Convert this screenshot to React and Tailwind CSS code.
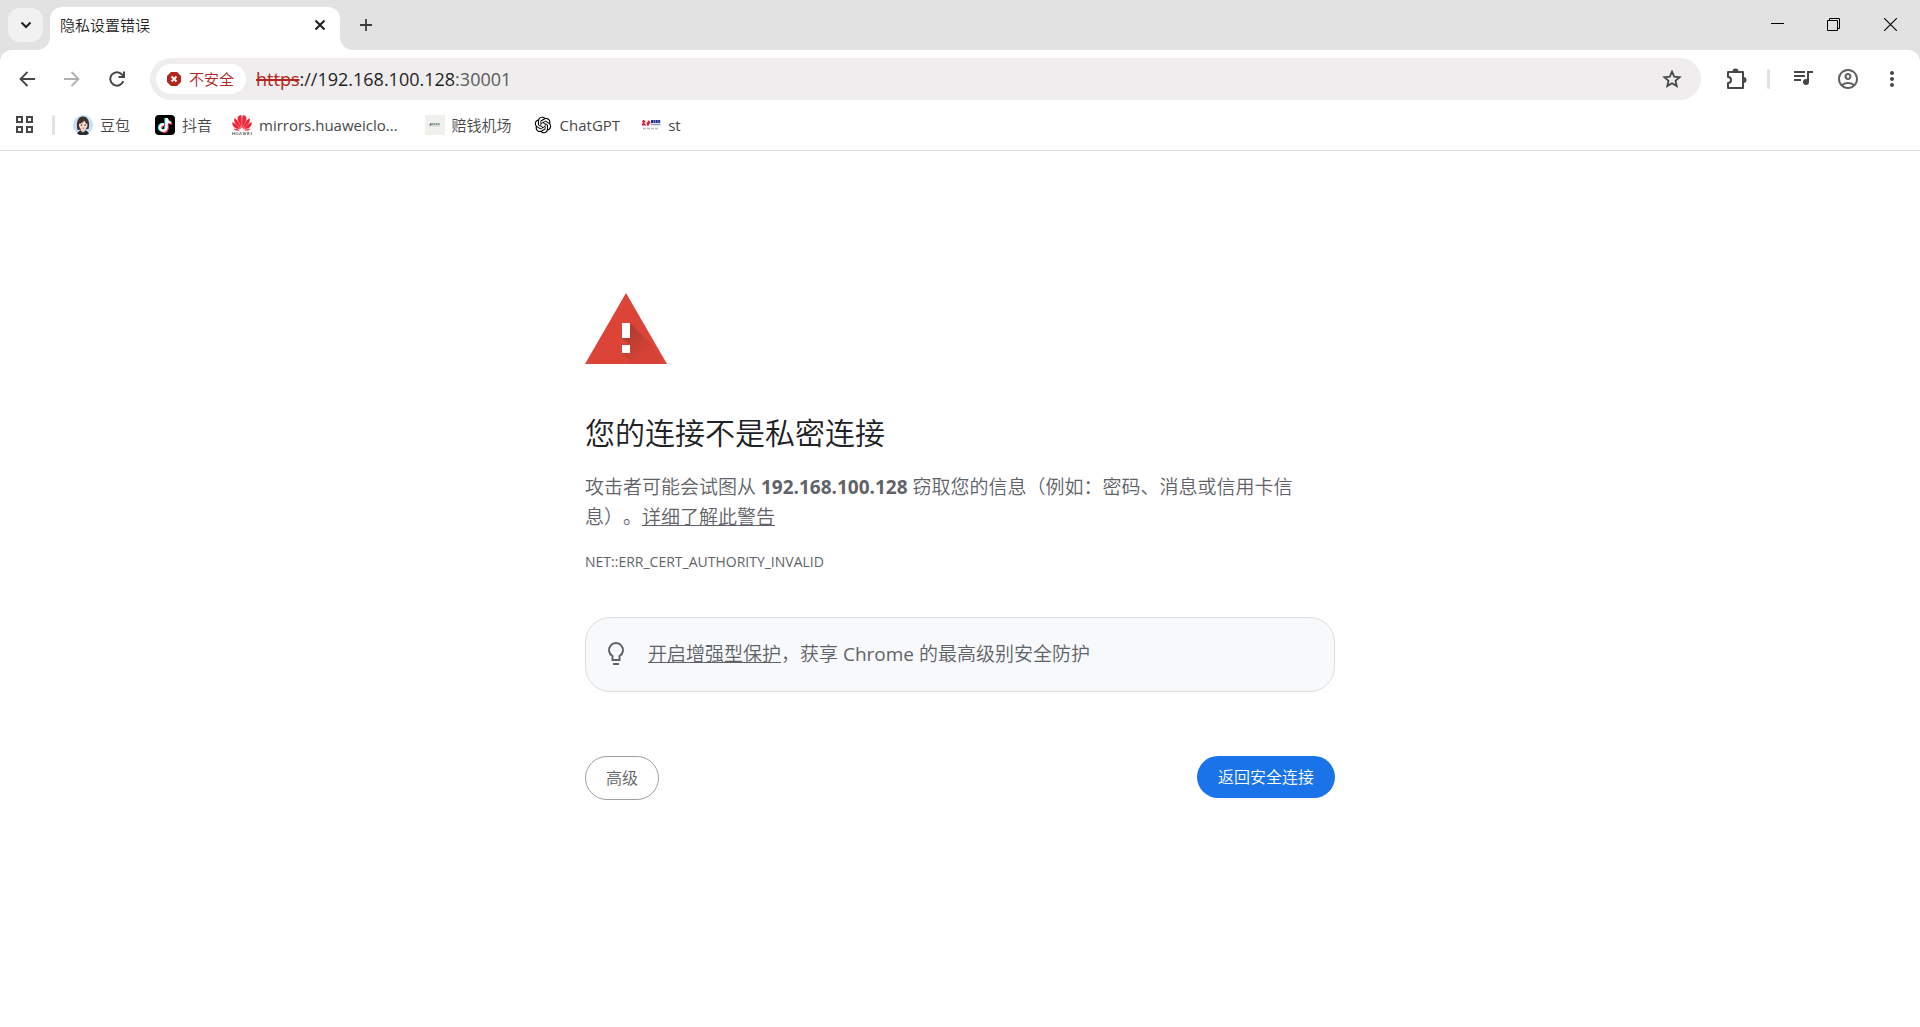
import React from "react";
import { MdOutlineAccountCircle, MdMoreVert } from "react-icons/md";
import { FaTiktok } from "react-icons/fa6";
import { RiOpenaiFill } from "react-icons/ri";

function TabCorner({ flip }) {
  return (
    <svg
      viewBox="0 0 13 13"
      aria-hidden="true"
      className={
        flip
          ? "absolute bottom-0 left-full size-[13px] -scale-x-100"
          : "absolute right-full bottom-0 size-[13px]"
      }
    >
      <path d="M13 0v13H0C7.200 13 13 7.200 13 0z" fill="#fff" />
    </svg>
  );
}

function TitleBar() {
  return (
    <header className="flex h-[50px] items-start pl-2">
      <button
        aria-label="搜索标签页"
        className="mt-2 flex h-[34px] w-[35px] items-center justify-center rounded-xl bg-[#f1f1f1]"
      >
        <svg viewBox="0 0 12 8" className="h-2 w-3" fill="none" stroke="#1f1f1f" strokeWidth="2">
          <path d="M1.500 1.500L6 6l4.500-4.500" />
        </svg>
      </button>
      <div className="relative mt-[7px] ml-[7px] h-[43px] w-[290px] rounded-t-xl bg-white">
        <TabCorner />
        <TabCorner flip />
        <div className="flex h-9 items-center justify-between pr-3 pl-[10px]">
          <span className="text-[15px] leading-5 text-[#1f1f1f]">隐私设置错误</span>
          <button aria-label="关闭标签页" className="flex size-4 items-center justify-center">
            <svg viewBox="0 0 12 12" className="size-3" stroke="#1f1f1f" strokeWidth="2">
              <path d="M1.500 1.500l9 9M10.500 1.500l-9 9" />
            </svg>
          </button>
        </div>
      </div>
      <button aria-label="新标签页" className="mt-[15px] ml-4 flex size-5 items-center justify-center">
        <svg viewBox="0 0 12 12" className="size-3" stroke="#3c3c3c" strokeWidth="1.800">
          <path d="M6 0v12M0 6h12" />
        </svg>
      </button>
      <div className="ml-auto flex h-12 items-center">
        <button aria-label="最小化" className="flex h-full w-14 items-center justify-center">
          <svg viewBox="0 0 13 13" className="size-[13px]" stroke="#000">
            <path d="M0 5.500h13" />
          </svg>
        </button>
        <button aria-label="还原" className="flex h-full w-14 items-center justify-center">
          <svg viewBox="0 0 13 13" className="size-[13px]" stroke="#000" fill="none">
            <path d="M.5 2.500h10v10H.5zM2.500 2.500v-2h10v10h-2" />
          </svg>
        </button>
        <button aria-label="关闭" className="flex h-full w-[59px] items-center justify-center">
          <svg viewBox="0 0 13 13" className="size-[13px]" stroke="#000" strokeWidth="1.100">
            <path d="M0 0l13 13M13 0L0 13" />
          </svg>
        </button>
      </div>
    </header>
  );
}

function Toolbar() {
  return (
    <div className="flex h-[58px] items-center pr-4 pl-[15px]">
      <nav className="flex items-center gap-[21px] text-[#474747]">
        <button aria-label="后退" className="flex size-6 items-center justify-center">
          <svg viewBox="0 0 16 16" className="size-4" fill="none" stroke="#474747" strokeWidth="1.800">
            <path d="M16 8H1.500M8.500 1L1.500 8l7 7" />
          </svg>
        </button>
        <button aria-label="前进" className="flex size-6 items-center justify-center">
          <svg viewBox="0 0 16 16" className="size-4" fill="none" stroke="#b0b0b0" strokeWidth="1.800">
            <path d="M0 8h14.500M7.500 1l7 7-7 7" />
          </svg>
        </button>
        <button aria-label="重新加载" className="flex size-6 items-center justify-center">
          <svg viewBox="0 0 16 16" className="size-4" fill="none" stroke="#474747" strokeWidth="2">
            <path d="M14.300 10.200A6.700 6.700 0 1 1 13.400 4L15 6M15 .5V6H9.500" />
          </svg>
        </button>
      </nav>
      <div className="ml-[21px] flex h-[42px] flex-1 items-center rounded-full bg-[#efedee] pr-[19px] pl-[6px]">
        <button className="flex h-[30px] items-center gap-2 rounded-full bg-white pr-3 pl-[11px] text-[15px] text-[#b3261e]">
          <svg viewBox="0 0 14 14" className="size-[14px]">
            <path d="M4 0h6l4 4v6l-4 4H4l-4-4V4z" fill="#b3261e" />
            <path d="M4.500 4.500l5 5M9.500 4.500l-5 5" stroke="#fff" strokeWidth="1.800" />
          </svg>
          不安全
        </button>
        <div
          role="textbox"
          tabIndex={0}
          aria-label="地址和搜索栏"
          className="ml-[10px] flex-1 text-[18px] leading-6 font-normal text-[#1f1f1f]"
        >
          <span className="text-[#b3261e] line-through decoration-2">https</span>
          <span>://192.168.100.128</span>
          <span className="text-[#5a5a5a]">:30001</span>
        </div>
        <button aria-label="为此标签页添加书签">
          <svg viewBox="0 0 20 20" className="size-5" fill="none" stroke="#474747" strokeWidth="1.800">
            <path d="M10 2.700l2.200 5 5.400.5-4.100 3.600 1.200 5.300-4.700-2.800-4.700 2.800 1.200-5.300-4.100-3.600 5.400-.5z" />
          </svg>
        </button>
      </div>
      <button aria-label="扩展程序" className="ml-6 flex size-[22px] items-center justify-center">
        <svg viewBox="0 0 22 22" className="size-[22px]">
          <path
            d="M3 4h15v16H3v-5c2 0 3-1.200 3-3s-1-3-3-3z"
            fill="none"
            stroke="#474747"
            strokeWidth="2"
            strokeLinejoin="round"
          />
          <path d="M7.500 3.500a3 3 0 0 1 6 0zM18.500 9a3 3 0 0 1 0 6z" fill="#474747" />
        </svg>
      </button>
      <span className="ml-5 h-5 w-[3px] rounded-full bg-[#e2e2e2]" />
      <button aria-label="媒体控件" className="ml-[21px] flex size-6 items-center justify-center">
        <svg viewBox="0 0 24 24" className="size-6" fill="none" stroke="#474747" strokeWidth="2">
          <path d="M3 5h11M3 9h11M3 13h7M17 15V5h5" />
          <circle cx="15" cy="15" r="3" fill="#474747" stroke="none" />
        </svg>
      </button>
      <button aria-label="个人资料" className="ml-[21px] text-[24px] text-[#5f5f5f]">
        <MdOutlineAccountCircle />
      </button>
      <button aria-label="更多" className="ml-5 text-[24px] text-[#474747]">
        <MdMoreVert />
      </button>
    </div>
  );
}

function DoubaoIcon() {
  return (
    <svg viewBox="0 0 20 20" className="size-5" aria-hidden="true">
      <circle cx="10" cy="10" r="10" fill="#c5e0fa" />
      <path d="M4.500 15C3 9 4 1.500 10 1.500S17 9 15.500 14z" fill="#43302d" />
      <path d="M4 18.500C5.500 15.500 8 15 10 15s4.500.5 6 3.500A10 10 0 0 1 4 18.500z" fill="#262a31" />
      <path d="M8 13h4v3l-2 1.500L8 16z" fill="#f0c5b4" />
      <ellipse cx="10.200" cy="9.800" rx="4.300" ry="5" fill="#fadccf" />
      <path d="M5.500 9C6 4.500 9 3.500 11 4c3 .5 4 3 4 5.500-2-1-3.200-2.500-3.700-4C10.500 7.500 8 8.500 5.500 9z" fill="#43302d" />
      <circle cx="8.500" cy="10" r=".8" fill="#382523" />
      <circle cx="12.200" cy="10" r=".8" fill="#382523" />
      <path d="M9.300 13q1 .7 2 0" stroke="#c24f55" strokeWidth=".8" fill="none" />
    </svg>
  );
}

function DouyinIcon() {
  return (
    <span className="relative block size-5 rounded-[4px] bg-black text-[14px]">
      <FaTiktok className="absolute top-[3px] left-[2px] text-[#25f4ee]" />
      <FaTiktok className="absolute top-1 left-1 text-[#fe2c55]" />
      <FaTiktok className="absolute top-[3px] left-[3px] text-white" />
    </span>
  );
}

function HuaweiIcon() {
  return (
    <svg viewBox="0 0 20 20" className="size-5" aria-hidden="true">
      <g fill="#ee2536" stroke="#fff" strokeWidth=".3">
        <path d="M9.800 14C6.500 10 4.800 5 5.800 1.700 7 .5 8.300.1 9.400.1c.8 3 .9 9 .4 13.900z" />
        <path d="M10.200 14C13.500 10 15.200 5 14.200 1.700 13 .5 11.700.1 10.600.1c-.8 3-.9 9-.4 13.900z" />
        <path d="M9.200 14.200C4 11.500 1 7 2.300 3c3.200 1.500 6.200 6 6.900 11.200z" />
        <path d="M10.800 14.200C16 11.500 19 7 17.700 3c-3.200 1.500-6.200 6-6.900 11.200z" />
        <path d="M8.500 14.600C3 14.500-.2 11.500.1 7c3.500 1 6.700 4.300 8.400 7.600z" />
        <path d="M11.500 14.600c5.500-.1 8.700-3.100 8.400-7.600-3.500 1-6.700 4.300-8.400 7.600z" />
        <path d="M8 15.200c-2.500 1.200-5 .8-6.500-1.400 2-.5 4.500.2 6.500 1.400zM12 15.200c2.500 1.200 5 .8 6.500-1.400-2-.5-4.500.2-6.500 1.400z" />
      </g>
      <path
        d="M.5 17v3M2.500 17v3M.5 18.500h2M4 17v3h2v-3M7.500 20l1-3 1 3M11 17l.7 3 .8-2.500.8 2.500.7-3M17.500 17.300H15.500v2.400h2M15.500 18.500h2M19.300 17v3"
        stroke="#777"
        strokeWidth=".8"
        fill="none"
      />
    </svg>
  );
}

function AirportIcon() {
  return (
    <svg viewBox="0 0 20 20" className="size-5" aria-hidden="true">
      <path d="M0 0h20v20H0z" fill="#f0f0ec" />
      <path d="M4 10.500L6 7.500l1 2.500z" fill="#4d6b68" />
      <path d="M7 9h8" stroke="#6d8682" strokeWidth="1.600" strokeDasharray="1.500 .4" />
      <path d="M4 10.800h11" stroke="#a9b5b2" strokeWidth=".6" />
    </svg>
  );
}

function StIcon() {
  return (
    <svg viewBox="0 0 20 20" className="size-5" aria-hidden="true" fill="none">
      <path d="M1 6.500h3.500M2.700 5v5.500M1 10.500l1.500-2.500 2 2.500M5.500 8h4M7.500 5.500v5M6 10.500L8.500 6" stroke="#d9203a" strokeWidth="1.300" />
      <path d="M10 6.500h9.500" stroke="#26308f" strokeWidth="3" strokeDasharray="2 .4" />
      <path d="M10 9.500h9.500" stroke="#8d91c8" strokeWidth="1.500" />
      <path d="M2 13.500h16" stroke="#bbb" strokeWidth="1.400" strokeDasharray="3 1" />
    </svg>
  );
}

const bookmarks = [
  { label: "豆包", icon: <DoubaoIcon />, style: "mr-[25px]" },
  { label: "抖音", icon: <DouyinIcon />, style: "mr-5" },
  { label: "mirrors.huaweiclo...", icon: <HuaweiIcon />, style: "mr-[27px] font-normal" },
  { label: "赔钱机场", icon: <AirportIcon />, style: "mr-[21px]" },
  {
    label: "ChatGPT",
    icon: <RiOpenaiFill className="size-5 text-black" />,
    style: "mr-[21px] font-normal",
  },
  { label: "st", icon: <StIcon />, style: "font-normal" },
];

function BookmarksBar() {
  return (
    <nav className="flex h-[43px] items-center border-b border-[#dfdfdf] pb-2 pl-4">
      <button aria-label="应用" className="flex size-[18px] items-center justify-center">
        <svg viewBox="0 0 18 18" className="size-[18px]" fill="none" stroke="#474747" strokeWidth="2">
          <path d="M1 1h5v5H1zM11 1h5v5h-5zM1 11h5v5H1zM11 11h5v5h-5z" />
        </svg>
      </button>
      <span className="mr-[18px] ml-[18px] h-5 w-[3px] rounded-full bg-[#e2e2e2]" />
      {bookmarks.map((b) => (
        <a
          key={b.label}
          href="#"
          className={`flex items-center gap-[7px] text-[15px] leading-5 whitespace-nowrap text-[#474747] ${b.style}`}
        >
          {b.icon}
          {b.label}
        </a>
      ))}
    </nav>
  );
}

function WarningTriangle() {
  return (
    <svg viewBox="0 0 82 71" className="h-[71px] w-[82px]" aria-hidden="true">
      <defs>
        <linearGradient id="shade" gradientUnits="userSpaceOnUse" x1="41" y1="42" x2="60" y2="62">
          <stop offset="0" stopColor="#3e2723" stopOpacity=".25" />
          <stop offset="1" stopColor="#3e2723" stopOpacity=".03" />
        </linearGradient>
      </defs>
      <path d="M41 0l41 71H0z" fill="#db4437" />
      <path d="M45 30l20 20 12 21H48L37 60l8-8-8-7z" fill="url(#shade)" />
      <path d="M37 30h8v15h-8zM37 52h8v8h-8z" fill="#fff" />
    </svg>
  );
}

export default function App() {
  return (
    <div
      className="min-h-screen bg-white font-['Open_Sans','Noto_Sans_CJK_SC',sans-serif] font-[350] [text-spacing-trim:space-all]"
      lang="zh-CN"
    >
      <div className="bg-[#e2e2e2]">
        <TitleBar />
        <div className="rounded-t-xl bg-white">
          <Toolbar />
          <BookmarksBar />
        </div>
      </div>
      <main className="mx-auto w-full max-w-[750px] pt-[142px] text-[19px] leading-[30px] text-[#5f6368]">
        <WarningTriangle />
        <h1 className="mt-[49px] text-[30px] leading-10 font-[350] text-[#202124]">
          您的连接不是私密连接
        </h1>
        <p className="mt-[19px]">
          攻击者可能会试图从 <strong className="font-bold">192.168.100.128</strong>{" "}
          窃取您的信息（例如：密码、消息或信用卡信息）。
          <a href="#" className="underline">
            详细了解此警告
          </a>
        </p>
        <p className="mt-5 text-[14px] leading-5 font-normal">NET::ERR_CERT_AUTHORITY_INVALID</p>
        <div className="mt-[45px] flex min-h-[75px] items-center gap-[19px] rounded-[25px] border border-[#dadce0] bg-[#f8f9fa] px-[17px] pb-0.5">
          <svg
            viewBox="0 0 26 26"
            className="size-[26px] shrink-0"
            fill="none"
            stroke="#5f6368"
            strokeWidth="2"
            aria-hidden="true"
          >
            <path d="M9.500 19v-3.900a7 7 0 1 1 7 0V19z" />
            <path d="M10 23h6" />
          </svg>
          <p>
            <a href="#" className="underline">
              开启增强型保护
            </a>
            ，获享 <span className="font-normal">Chrome</span> 的最高级别安全防护
          </p>
        </div>
        <div className="mt-16 flex items-start justify-between text-[16px] leading-6">
          <button className="h-11 rounded-full border border-[#9aa0a6] bg-white px-5">高级</button>
          <button className="h-[42px] rounded-full bg-[#1a73e8] px-[21px] text-white">返回安全连接</button>
        </div>
      </main>
    </div>
  );
}
